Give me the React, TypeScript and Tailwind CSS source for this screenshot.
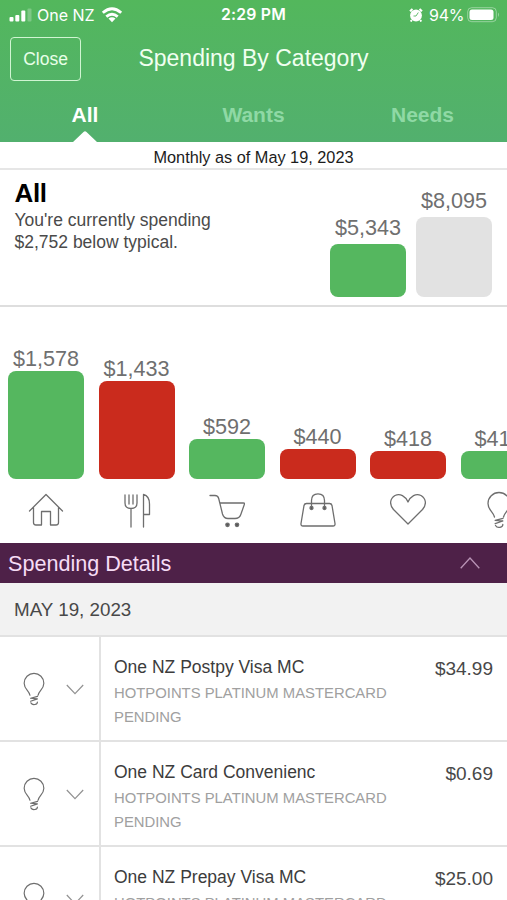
import type { ReactNode } from "react";

function Icon({ name, className }: { name: string; className?: string }) {
  const shapes: Record<string, ReactNode> = {
    home: (
      <path d="M1.5 20 18 3.5 34.5 20M5.5 16.500V31.500Q5.500 34 8 34H13.500V20.500H22.500V34H28Q30.500 34 30.500 31.500V16.500" />
    ),
    food: (
      <path d="M6 4V12Q6 17.500 12 17.500T18 12V4M10 4V13M14 4V13M12 17.500V36M24.500 36V3.500Q30.500 5 30.500 13V23.500H24.500" />
    ),
    cart: (
      <>
        <path d="M1 4.500H6Q9 4.500 9.700 7.500L13.500 23Q14.800 27.500 19 27.500H26Q30.500 27.500 31.800 23.500L35.500 13Q36 12 34.500 12H11" />
        <circle cx="18.500" cy="33.800" r="1.700" fill="#555" />
        <circle cx="28" cy="33.800" r="1.700" fill="#555" />
      </>
    ),
    bag: (
      <>
        <path d="M6.500 12.500H29.500Q31.500 12.500 32 14.500L35 32.500Q35.300 35 33 35H3Q.700 35 1 32.500L4 14.500Q4.500 12.500 6.500 12.500ZM11.500 17V9.500Q11.500 2.800 18 2.800T24.500 9.500V17" />
        <circle cx="11.500" cy="17" r="1.500" fill="#555" />
        <circle cx="24.500" cy="17" r="1.500" fill="#555" />
      </>
    ),
    heart: (
      <path d="M18 33 3.500 18.500C-1 13.500 0 7.500 5 4.500 10 2 15.500 5 18 11 20.500 5 26 2 31 4.500 36 7.500 37 13.500 32.500 18.500Z" />
    ),
    bulb: (
      <path d="M13.500 26C12.500 21 7 19 7 12.500A11 11 0 0 1 29 12.500C29 19 23.500 21 22.500 26M14.200 29.300 22 27.300M14.200 29.300 21.800 30M14.200 32.700 21.800 30M14.500 34.500Q16 37 19 36.300T21.800 33.500" />
    ),
  };
  return (
    <svg viewBox="0 0 36 38" className={className} fill="none" stroke="#6e6e6e" strokeWidth="1.300" strokeLinejoin="round" strokeLinecap="round">
      {shapes[name]}
    </svg>
  );
}

function Signal() {
  return (
    <svg className="ml-[9px] h-[14px] w-[23px]" viewBox="0 0 23 14" fill="#fff">
      <rect x="0.500" y="9" width="4" height="4.500" rx="1" />
      <rect x="6.300" y="7" width="4" height="6.500" rx="1" />
      <rect x="12.300" y="2.500" width="4" height="11" rx="1" />
      <rect x="18.500" y="0.500" width="4" height="13" rx="1" opacity="0.250" />
    </svg>
  );
}

function StatusBar() {
  return (
    <div className="grid h-[30px] grid-cols-[1fr_auto_1fr] items-center font-['Inter','Liberation_Sans',sans-serif] text-white">
      <div className="flex items-center">
        <Signal />
        <span className="ml-[5px] w-[58px] text-[16px] whitespace-nowrap">One NZ</span>
        <svg className="ml-[6px] h-[16px] w-[22px]" viewBox="0 0 22 16" fill="none" stroke="#fff" strokeWidth="2.800">
          <path d="M1.800 5.800Q11-2.300 20.200 5.800M5.300 9.600Q11 4.800 16.700 9.600" />
          <path d="M7.500 11.600Q11 8.700 14.500 11.600L11 15.200Z" fill="#fff" stroke="none" />
        </svg>
      </div>
      <span className="text-[15.8px] font-semibold tracking-[0.2px] whitespace-nowrap">2:29 PM</span>
      <div className="flex items-center justify-end pr-[7px]">
        <svg className="h-[14px] w-[14px]" viewBox="0 0 14 14">
          <circle cx="7" cy="7.500" r="5.900" fill="#fff" />
          <path d="M1 3.200 3.500.900M13 3.200 10.500.900M2.800 12 1.700 13.500M11.200 12l1.100 1.500" stroke="#fff" strokeWidth="2" />
          <path d="M9.300 4.500 7 8H4.500" fill="none" stroke="#53b661" strokeWidth="0.900" />
        </svg>
        <span className="ml-[6px] w-[35px] text-[16px] tracking-[-0.200px] whitespace-nowrap">94%</span>
        <svg className="ml-[3px] h-[16px] w-[33px]" viewBox="0 0 33 16">
          <rect x="0.700" y="0.700" width="28.600" height="14" rx="4" fill="none" stroke="#fff" strokeOpacity="0.400" />
          <rect x="2.500" y="2.500" width="24" height="10.500" rx="2.500" fill="#fff" />
          <path d="M31 5.500Q33 7.700 31 10Z" fill="#fff" opacity="0.400" />
        </svg>
      </div>
    </div>
  );
}

function Header() {
  return (
    <header className="h-[142px] bg-linear-to-b from-[#53b75c] to-[#52b06e] text-white">
      <StatusBar />
      <div className="grid h-[60px] grid-cols-[1fr_auto_1fr] items-start pt-[7px]">
        <button className="ml-[10px] h-[44px] w-[71px] rounded-[4px] border-[1.5px] border-[#d0f5d2] text-[17.5px] leading-[42px] text-[#e8ffe8]">
          Close
        </button>
        <h1 className="text-[23px] leading-[42px] whitespace-nowrap text-[#f0fff0]">Spending By Category</h1>
      </div>
      <nav className="grid h-[52px] grid-cols-3 text-center text-[21px] font-bold text-[#8fd9a5]">
        <div className="flex flex-col items-center justify-between pl-px text-white">
          <span className="h-[41px] leading-[50px]">All</span>
          <svg className="h-[11px] w-[24px]" viewBox="0 0 24 11">
            <path d="M0 11 10.500 1Q12-.500 13.500 1L24 11Z" fill="#fff" />
          </svg>
        </div>
        <span className="leading-[50px]">Wants</span>
        <span className="leading-[50px]">Needs</span>
      </nav>
    </header>
  );
}

function Summary() {
  return (
    <section className="flex h-[137px] justify-between border-b-2 border-[#dedede] pr-[15px] pl-[14.5px]">
      <div className="pt-[7px]">
        <h2 className="text-[26px] leading-[32px] font-bold tracking-[-0.4px] text-black">All</h2>
        <p className="pt-px text-[17.5px] leading-[21.5px] whitespace-nowrap text-[#4a4a4a]">
          You're currently spending
          <br />
          $2,752 below typical.
        </p>
      </div>
      <div className="flex items-end gap-[10px] pb-[8px] text-center text-[21.6px] leading-[24px] text-[#6f6f6f]">
        <div className="w-[76px]">
          <div className="mb-[4px]">$5,343</div>
          <div className="h-[53px] rounded-[8px] bg-[#55b75f]" />
        </div>
        <div className="w-[76px]">
          <div className="mb-[4px]">$8,095</div>
          <div className="h-[80.5px] rounded-[8px] bg-[#e2e2e2]" />
        </div>
      </div>
    </section>
  );
}

const categories = [
  { amount: "$1,578", height: 107.5, over: false, icon: "home" },
  { amount: "$1,433", height: 97.5, over: true, icon: "food" },
  { amount: "$592", height: 40, over: false, icon: "cart" },
  { amount: "$440", height: 30, over: true, icon: "bag" },
  { amount: "$418", height: 28, over: true, icon: "heart" },
  { amount: "$417", height: 28, over: false, icon: "bulb" },
];

function CategoryChart() {
  return (
    <section className="flex h-[236px] gap-[14.5px] overflow-hidden pl-[8px]">
      {categories.map((c) => (
        <div key={c.amount} className="flex w-[76px] shrink-0 flex-col items-center">
          <div className="flex h-[171.5px] w-full flex-col justify-end text-center">
            <span className="text-[21.6px] leading-[24px] text-[#6f6f6f]">{c.amount}</span>
            <div className={`rounded-[8px] ${c.over ? "bg-[#ca2b1d]" : "bg-[#55b75f]"}`} style={{ height: c.height }} />
          </div>
          <Icon name={c.icon} className="mt-[12.5px] h-[38px] w-[36px]" />
        </div>
      ))}
    </section>
  );
}

function Transaction({ name, amount }: { name: string; amount: string }) {
  return (
    <li className="flex h-[105px] shrink-0 border-b-2 border-[#e2e2e2]">
      <div className="flex w-[100.5px] shrink-0 items-center border-r-2 border-[#e2e2e2] pl-[17px]">
        <Icon name="bulb" className="h-[34px] w-[34px]" />
        <svg className="mt-[2px] ml-[15px] h-[11px] w-[18px]" viewBox="0 0 18 11" fill="none" stroke="#929292" strokeWidth="1.200">
          <path d="M.800 1 9 9.700 17.200 1" />
        </svg>
      </div>
      <div className="flex grow justify-between pr-[14px] pl-[13.5px] whitespace-nowrap">
        <div className="pt-[18px] text-[14.85px] leading-[24px] text-[#a0a0a0]">
          <div className="mb-[2px] text-[17.5px] text-[#3c3c3c]">{name}</div>
          <div>HOTPOINTS PLATINUM MASTERCARD</div>
          <div>PENDING</div>
        </div>
        <div className="pt-[20px] text-[19px] leading-[24px] text-[#484848]">{amount}</div>
      </div>
    </li>
  );
}

export default function App() {
  return (
    <div className="h-[900px] w-[507px] overflow-hidden bg-white font-['Liberation_Sans',Arial,sans-serif]">
      <Header />
      <div className="h-[28px] border-b-2 border-[#e6e6e6] text-center text-[16.3px] leading-[30px] text-[#1c1c1c]">
        Monthly as of May 19, 2023
      </div>
      <Summary />
      <CategoryChart />
      <div className="flex h-[40px] items-center justify-between bg-[#4e2148] pr-[27px] pl-[8px] text-[21.6px] text-[#f6dcf5]">
        <span className="pt-[2px]">Spending Details</span>
        <svg className="h-[12px] w-[20px]" viewBox="0 0 20 12" fill="none" stroke="#b893b5" strokeWidth="1.300">
          <path d="M.700 11.200 10 1 19.300 11.200" />
        </svg>
      </div>
      <div className="h-[54px] border-b-2 border-[#e2e2e2] bg-[#f2f2f2] pl-[14px] text-[18.8px] leading-[53px] text-[#484848]">
        MAY 19, 2023
      </div>
      <ul>
        <Transaction name="One NZ Postpy Visa MC" amount="$34.99" />
        <Transaction name="One NZ Card Convenienc" amount="$0.69" />
        <Transaction name="One NZ Prepay Visa MC" amount="$25.00" />
      </ul>
    </div>
  );
}
